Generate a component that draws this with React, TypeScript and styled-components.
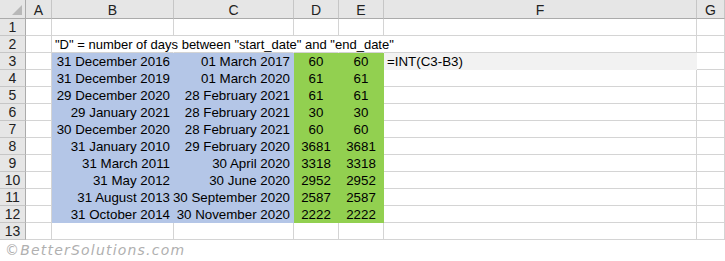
import React from 'react'
import styled, { createGlobalStyle } from 'styled-components'

const BLUE = '#b4c6e7'
const GREEN = '#92d050'
const GRID = '#d4d4d4'

const columns = ['A', 'B', 'C', 'D', 'E', 'F', 'G']

const rows = [
  ['31 December 2016', '01 March 2017', '60', '60'],
  ['31 December 2019', '01 March 2020', '61', '61'],
  ['29 December 2020', '28 February 2021', '61', '61'],
  ['29 January 2021', '28 February 2021', '30', '30'],
  ['30 December 2020', '28 February 2021', '60', '60'],
  ['31 January 2010', '29 February 2020', '3681', '3681'],
  ['31 March 2011', '30 April 2020', '3318', '3318'],
  ['31 May 2012', '30 June 2020', '2952', '2952'],
  ['31 August 2013', '30 September 2020', '2587', '2587'],
  ['31 October 2014', '30 November 2020', '2222', '2222']
]

const GlobalStyle = createGlobalStyle`
  body {
    margin: 0;
    background: #ffffff;
    font-family: "Liberation Sans", Arial, sans-serif;
  }
`

const Page = styled.div`
  width: 725px;
  height: 261px;
  overflow: hidden;
  background: #ffffff;
`

const Sheet = styled.div`
  display: grid;
  grid-template-columns: 26px 26px 122px 120px 45px 45px 313px 28px;
  grid-template-rows: 19px repeat(13, 17px);
  width: 725px;
  font-size: 13.33px;
  color: #000000;
`

const Corner = styled.div`
  position: relative;
  box-sizing: border-box;
  background: #e6e6e6;
  border-right: 1px solid #ababab;
  border-bottom: 1px solid #ababab;

  &::after {
    content: '';
    position: absolute;
    right: 3px;
    bottom: 3px;
    width: 0;
    height: 0;
    border-left: 10px solid transparent;
    border-bottom: 10px solid #b8b8b8;
  }
`

const ColHeader = styled.div`
  box-sizing: border-box;
  display: flex;
  align-items: center;
  justify-content: center;
  background: #e6e6e6;
  border-right: 1px solid #c6c6c6;
  border-bottom: 1px solid #ababab;
  font-size: 14px;
  color: #222222;
  padding-top: 1px;
`

const RowHeader = styled.div`
  box-sizing: border-box;
  display: flex;
  align-items: center;
  justify-content: center;
  background: #e6e6e6;
  border-right: 1px solid #ababab;
  border-bottom: 1px solid #c6c6c6;
  font-size: 14px;
  color: #222222;
`

const Cell = styled.div<{ $fill?: string; $align?: string; $open?: boolean }>`
  box-sizing: border-box;
  display: flex;
  align-items: center;
  justify-content: ${p => p.$align || 'flex-start'};
  padding: 0 3px;
  white-space: nowrap;
  overflow: visible;
  background: ${p => p.$fill || 'transparent'};
  border-right: 1px solid ${p => (p.$open ? 'transparent' : p.$fill || GRID)};
  border-bottom: 1px solid ${p => p.$fill || GRID};
`

const Note = styled.span`
  position: relative;
  z-index: 1;
  font-size: 13px;
`

const Watermark = styled.div`
  padding: 2px 0 0 5px;
  font-family: "DejaVu Sans", sans-serif;
  font-style: italic;
  font-size: 14px;
  letter-spacing: 1.2px;
  color: #b0b0b0;
`

const App: React.FC = () => {
  return (
    <Page>
      <GlobalStyle />
      <Sheet>
        <Corner />
        {columns.map(c => (
          <ColHeader key={c}>{c}</ColHeader>
        ))}

        <RowHeader>1</RowHeader>
        {columns.map(c => (
          <Cell key={c} />
        ))}

        <RowHeader>2</RowHeader>
        <Cell />
        <Cell $open>
          <Note>"D" = number of days between "start_date" and "end_date"</Note>
        </Cell>
        <Cell $open />
        <Cell $open />
        <Cell $open />
        <Cell />
        <Cell />

        {rows.map((r, i) => (
          <React.Fragment key={i}>
            <RowHeader>{i + 3}</RowHeader>
            <Cell />
            <Cell $fill={BLUE} $align="flex-end">
              {r[0]}
            </Cell>
            <Cell $fill={BLUE} $align="flex-end">
              {r[1]}
            </Cell>
            <Cell $fill={GREEN} $align="center">
              {r[2]}
            </Cell>
            <Cell $fill={GREEN} $align="center">
              {r[3]}
            </Cell>
            {i === 0 ? <Cell $fill="#f2f2f2">=INT(C3-B3)</Cell> : <Cell />}
            <Cell />
          </React.Fragment>
        ))}

        <RowHeader>13</RowHeader>
        {columns.map(c => (
          <Cell key={c} />
        ))}
      </Sheet>
      <Watermark>©BetterSolutions.com</Watermark>
    </Page>
  )
}

export default App
